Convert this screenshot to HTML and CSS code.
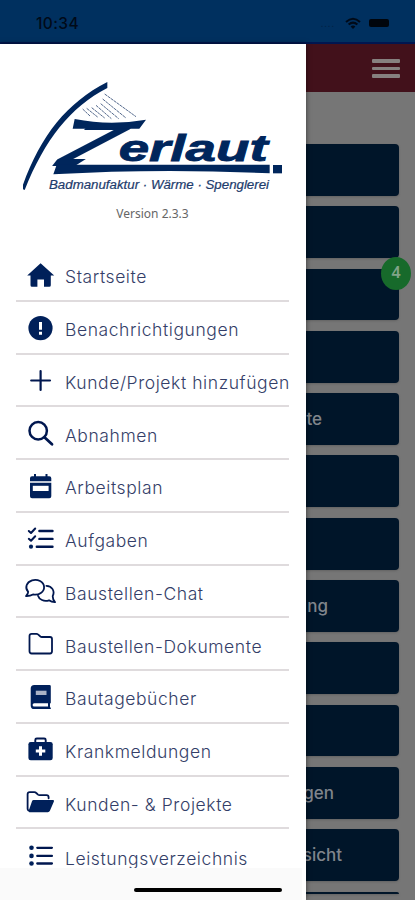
FILE: index.html
```html
<!DOCTYPE html>
<html lang="de">
<head>
<meta charset="utf-8">
<title>Zerlaut</title>
<link rel="stylesheet" href="styles.css">
</head>
<body>
<div class="phone">
  <header class="status">
    <span class="time">10:34</span>
    <span class="dots">....</span>
    <svg class="wifi" width="16" height="13" viewBox="0 0 16 13"><path d="M1 5Q8-1.4 15 5M3.6 7.6Q8 3.6 12.4 7.6" fill="none" stroke="#000a18" stroke-width="2"/><path d="M5.6 9.4Q8 7.6 10.4 9.4L8 12Z" fill="#000a18"/></svg>
    <span class="battery"></span>
  </header>
  <div class="page">
    <div class="appbar"><div class="burger"><i></i><i></i><i></i></div></div>
    <div class="tiles">
      <div class="tile"></div>
      <div class="tile"></div>
      <div class="tile"><b class="badge">4</b></div>
      <div class="tile"></div>
      <div class="tile"><span class="t1">te</span></div>
      <div class="tile"></div>
      <div class="tile"></div>
      <div class="tile"><span class="t2">ng</span></div>
      <div class="tile"></div>
      <div class="tile"></div>
      <div class="tile"><span class="t3">gen</span></div>
      <div class="tile"><span class="t4">sicht</span></div>
      <div class="tile cut"></div>
    </div>
  </div>
  <aside class="drawer">
    <svg class="logo" width="290" height="125" viewBox="0 0 870 375">
      <g fill="#00265c">
        <path d="M292 36V54C180 112 105 208 44 360L39 358V344C92 198 170 98 292 36Z"/>
        <text class="z" transform="translate(133 287) skewX(-27) scale(1.46 1)" font-size="188">Z</text>
        <path d="M236 262H345V286H198Z" fill="#fff"/>
        <path d="M194 147Q300 168 408 149L388 176H188Z"/>
        <path d="M140 284H779V310Q450 294 130 313Z"/>
        <rect x="789" y="285" width="27" height="25"/>
        <text class="word" x="326" y="272" font-size="111" textLength="447" lengthAdjust="spacingAndGlyphs">erlaut</text>
        <text class="sub" x="117" y="357" font-size="36" textLength="660" lengthAdjust="spacingAndGlyphs">Badmanufaktur · Wärme · Spenglerei</text>
      </g>
      <g stroke="#54698c" stroke-width="3" stroke-dasharray="9 2" fill="none"><path d="M284 72L378 140M278 87L348 144M272 101L326 146M258 106L304 146M245 113L284 144M230 115L264 142M218 117L240 138"/></g>
    </svg>
    <div class="version">Version 2.3.3</div>
    <nav class="menu">
      <a class="row"><svg class="icon" viewBox="0 0 32 30"><path d="M16.6 3.2L30.2 15.5H26.8V25.2Q26.8 26.8 25.2 26.8H20V19.5H13.4V26.8H8Q6.5 26.8 6.5 25.2V15.5H3.2Z" stroke-linejoin="round"/></svg><span>Startseite</span></a>
      <a class="row"><svg class="icon" viewBox="0 0 32 30"><circle cx="16.5" cy="15.1" r="12.1"/><path class="w" d="M15 9H18V16.8H15ZM15 18.8H18V21.8H15Z"/></svg><span>Benachrichtigungen</span></a>
      <a class="row"><svg class="icon" viewBox="0 0 32 30"><path class="l" d="M16.6 6V25M7.2 15.5H26" stroke-width="2.2"/></svg><span>Kunde/Projekt hinzufügen</span></a>
      <a class="row"><svg class="icon" viewBox="0 0 32 30"><path class="l" d="M20.7 19.5L28 26.3" stroke-width="2.8"/><circle class="l" cx="14.2" cy="12.7" r="8.7" stroke-width="2.5"/></svg><span>Abnahmen</span></a>
      <a class="row"><svg class="icon" viewBox="0 0 32 30"><path d="M10 5.3V3H12V5.3H21.5V3H23.5V5.3H25.3Q27.3 5.3 27.3 7.3V10.2H6V7.3Q6 5.3 8 5.3ZM6 11.8H27.3V25.3Q27.3 27.3 25.3 27.3H8Q6 27.3 6 25.3Z"/><path class="w" d="M8.8 14.8H24.6V20H8.8Z"/></svg><span>Arbeitsplan</span></a>
      <a class="row"><svg class="icon" viewBox="0 0 32 30"><path class="l" d="M15.4 7H28.5M15.4 14.9H28.5M12.8 22.7H28.5" stroke-width="2.4"/><path class="l" d="M4.8 7L7 9L11.2 4.5M4.8 14.8L7 16.8L11.2 12.3" stroke-width="2"/><circle cx="7" cy="22.7" r="2.1"/></svg><span>Aufgaben</span></a>
      <a class="row"><svg class="icon" viewBox="0 0 32 30"><path class="l" d="M2 20Q4.3 17.6 4.2 15.8A8.9 7.4 0 1 1 9 18.4Q6 20.2 2 20Z" stroke-width="1.8"/><path class="l" d="M22.4 9.8C28 10 31.2 15 28.7 20.2Q28.7 23.5 31 26.2Q27.7 26.3 25 24.3C20 26 15 23.4 14 19.8" stroke-width="1.8"/></svg><span>Baustellen-Chat</span></a>
      <a class="row"><svg class="icon" viewBox="0 0 32 30"><path class="l" d="M5.5 22.3V7Q5.5 4.8 7.7 4.8H12.5Q13.4 4.8 14 5.4L16.4 7.5Q17 8 17.8 8H26Q28 8 28 10V22.3Q28 24.5 26 24.5H7.7Q5.5 24.5 5.5 22.3Z" stroke-width="1.8"/></svg><span>Baustellen-Dokumente</span></a>
      <a class="row"><svg class="icon" viewBox="0 0 32 30"><path d="M10.3 3H25.5Q26.8 3 26.8 4.3V20.7L26 21.8V25L26.8 26V27H10.3Q6.7 27 6.7 23.4V6.6Q6.7 3 10.3 3Z"/><path d="M11.8 8.7H22.5V13H11.8Z" fill="#a9b2c6"/><path class="w" d="M10.3 21.3H24V24.6H10.3Q8.6 24.6 8.6 23Q8.6 21.3 10.3 21.3Z"/></svg><span>Bautagebücher</span></a>
      <a class="row"><svg class="icon" viewBox="0 0 32 30"><path class="l" d="M11.3 8V5Q11.3 3.5 12.8 3.5H20.2Q21.7 3.5 21.7 5V8" stroke-width="1.9"/><rect x="4.4" y="7" width="24.3" height="18.3" rx="2.3"/><path class="w" d="M15 11.3H18V14.5H21.3V17.5H18V20.8H15V17.5H11.8V14.5H15Z"/></svg><span>Krankmeldungen</span></a>
      <a class="row"><svg class="icon" viewBox="0 0 32 30"><path class="l" d="M4.3 23.4Q3.6 22.8 3.6 21.8V7.3Q3.6 5.2 5.7 5.2H10.3Q11.5 5.2 12.3 6L14 7.6Q14.7 8.2 15.6 8.2H22.5Q24.6 8.2 24.6 10.3V11.3" stroke-width="1.8"/><path d="M9.6 13H29Q30.6 13 29.9 14.5L25.9 23.8Q25.3 25.2 23.8 25.2H5.5Q4 25.2 4.7 23.8L8.1 14Q8.5 13 9.6 13Z"/></svg><span>Kunden- &amp; Projekte</span></a>
      <a class="row last"><svg class="icon" viewBox="0 0 32 30"><path class="l" d="M13.3 6.8H27.9M13.3 14.9H27.9M13.3 22.5H27.9" stroke-width="2.3"/><circle cx="7.5" cy="6.8" r="2.3"/><circle cx="7.5" cy="14.9" r="2.3"/><circle cx="7.5" cy="22.5" r="2.3"/></svg><span>Leistungsverzeichnis</span></a>
    </nav>
    <div class="foot"></div>
  </aside>
  <div class="home"></div>
</div>
</body>
</html>
```
FILE: styles.css
```css
* { box-sizing: border-box; }
body { margin: 0; font-family: Inter, "Liberation Sans", sans-serif; }
.phone { position: relative; width: 415px; height: 900px; overflow: hidden; background: #767676; display: flex; flex-direction: column; }
.status { height: 44px; flex: none; background: #00305f; border-bottom: 2px solid #001650; display: flex; align-items: center; padding: 4px 26px 0 36px; color: #000a18; }
.time { font-size: 15.5px; font-weight: 500; letter-spacing: .4px; flex: 1; }
.dots { font-size: 9px; opacity: .35; margin-right: 10px; letter-spacing: 1px; }
.wifi { margin-right: 8px; }
.battery { width: 20px; height: 8px; border-radius: 2px; background: #00050c; }
.page { flex: 1; min-height: 0; display: flex; flex-direction: column; }
.appbar { height: 48px; flex: none; background: #42111b; display: flex; justify-content: flex-end; padding: 15px 15px 0 0; }
.burger { display: flex; flex-direction: column; gap: 4px; width: 28px; }
.burger i { height: 3.6px; border-radius: 1px; background: #86807f; }
.tiles { padding: 52px 16px 0; display: flex; flex-direction: column; gap: 10.5px; }
.tile { position: relative; height: 51.8px; flex: none; border-radius: 4px; background: #001529; color: #80858c; display: flex; align-items: center; justify-content: flex-end; font-size: 17px; font-weight: 500; box-shadow: 0 1px 2px #5558; }
.cut { height: 2.5px; border-radius: 4px 4px 0 0; }
.t1 { margin-right: 77px; }
.t2 { margin-right: 71px; }
.t3 { margin-right: 65px; }
.t4 { margin-right: 57px; }
.badge { position: absolute; right: -12px; top: -12px; width: 30px; height: 33px; border-radius: 50%; background: #176a2b; color: #81a489; display: flex; align-items: center; justify-content: center; padding-bottom: 2px; font: 600 16px "Noto Sans", sans-serif; }
.drawer { position: absolute; left: 0; top: 44px; width: 305.5px; height: 856px; background: #fff; box-shadow: 0 0 5px #0008; overflow: hidden; }
.logo { display: block; margin: 26px 0 0 10px; }
.z, .word { font-family: "Liberation Sans", sans-serif; font-weight: 700; font-style: italic; }
.word { stroke: #00265c; stroke-width: 2.5px; }
.sub { font-family: "Liberation Sans", sans-serif; font-style: italic; fill: #1d3b6c; stroke: #1d3b6c; stroke-width: .6px; }
.version { margin: 9px 0 0; width: 305px; height: 20px; text-align: center; font: 12px/20px "Noto Sans", sans-serif; color: #666; }
.menu { margin: 25px 17px 0 16px; }
.row { display: flex; align-items: center; height: 52.75px; border-bottom: 2px solid #dfdbdd; padding: 1px 0 0 8px; color: #343e68; white-space: nowrap; }
.last { border-bottom: 0; }
.row span { margin-left: 9px; padding-top: 4px; font-size: 17.5px; font-weight: 300; letter-spacing: .58px; }
.icon { width: 32px; height: 30px; flex: none; fill: #00205a; }
.icon .w { fill: #fff; }
.icon .l { fill: none; stroke: #00174f; stroke-linecap: round; stroke-linejoin: round; }
.foot { position: absolute; left: 0; bottom: 0; width: 302px; height: 32px; background: #fafafa; }
.home { position: absolute; left: 134px; top: 887.5px; width: 148px; height: 4.5px; border-radius: 3px; background: #000; }
```
